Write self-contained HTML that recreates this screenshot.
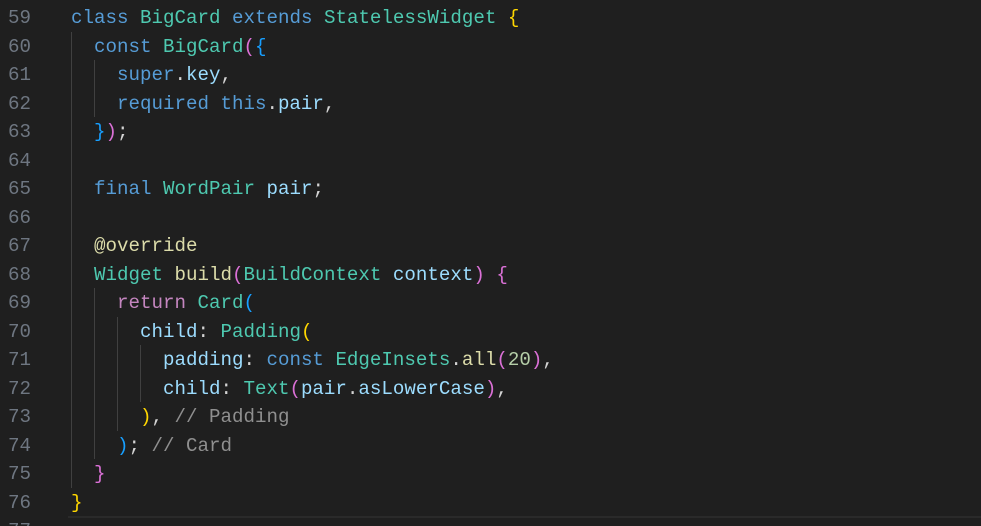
<!DOCTYPE html>
<html><head><meta charset="utf-8"><style>
html,body{margin:0;padding:0;background:#1f1f1f;width:981px;height:526px;overflow:hidden}
.ed{position:relative;font-family:"Liberation Mono",monospace;font-size:19.17px;}
.l{position:absolute;left:0;height:28.5px;line-height:28.5px;white-space:pre;width:981px}
.n{position:absolute;left:0;width:31px;text-align:right;color:#6e7681}
.c{position:absolute;left:71px;color:#d4d4d4}
.k{color:#569cd6}.t{color:#4ec9b0}.v{color:#9cdcfe}.f{color:#dcdcaa}.m{color:#b5cea8}.cm{color:#8f8f8f}.kc{color:#c586c0}
.g{color:#ffd700}.p{color:#da70d6}.b{color:#179fff}
.ig{position:absolute;width:1px;background:#404040}
</style></head><body><div class="ed">
<div class="ig" style="left:71px;top:32px;height:456px"></div>
<div class="ig" style="left:94px;top:60px;height:57px"></div>
<div class="ig" style="left:94px;top:288px;height:171px"></div>
<div class="ig" style="left:117px;top:317px;height:114px"></div>
<div class="ig" style="left:140px;top:345px;height:57px"></div>
<div class="l" style="top:4px"><span class="n">59</span><span class="c"><span class="k">class</span> <span class="t">BigCard</span> <span class="k">extends</span> <span class="t">StatelessWidget</span> <span class="g">{</span></span></div>
<div class="l" style="top:32.5px"><span class="n">60</span><span class="c">  <span class="k">const</span> <span class="t">BigCard</span><span class="p">(</span><span class="b">{</span></span></div>
<div class="l" style="top:61px"><span class="n">61</span><span class="c">    <span class="k">super</span>.<span class="v">key</span>,</span></div>
<div class="l" style="top:89.5px"><span class="n">62</span><span class="c">    <span class="k">required</span> <span class="k">this</span>.<span class="v">pair</span>,</span></div>
<div class="l" style="top:118px"><span class="n">63</span><span class="c">  <span class="b">}</span><span class="p">)</span>;</span></div>
<div class="l" style="top:146.5px"><span class="n">64</span></div>
<div class="l" style="top:175px"><span class="n">65</span><span class="c">  <span class="k">final</span> <span class="t">WordPair</span> <span class="v">pair</span>;</span></div>
<div class="l" style="top:203.5px"><span class="n">66</span></div>
<div class="l" style="top:232px"><span class="n">67</span><span class="c">  <span class="f">@override</span></span></div>
<div class="l" style="top:260.5px"><span class="n">68</span><span class="c">  <span class="t">Widget</span> <span class="f">build</span><span class="p">(</span><span class="t">BuildContext</span> <span class="v">context</span><span class="p">)</span> <span class="p">{</span></span></div>
<div class="l" style="top:289px"><span class="n">69</span><span class="c">    <span class="kc">return</span> <span class="t">Card</span><span class="b">(</span></span></div>
<div class="l" style="top:317.5px"><span class="n">70</span><span class="c">      <span class="v">child</span>: <span class="t">Padding</span><span class="g">(</span></span></div>
<div class="l" style="top:346px"><span class="n">71</span><span class="c">        <span class="v">padding</span>: <span class="k">const</span> <span class="t">EdgeInsets</span>.<span class="f">all</span><span class="p">(</span><span class="m">20</span><span class="p">)</span>,</span></div>
<div class="l" style="top:374.5px"><span class="n">72</span><span class="c">        <span class="v">child</span>: <span class="t">Text</span><span class="p">(</span><span class="v">pair</span>.<span class="v">asLowerCase</span><span class="p">)</span>,</span></div>
<div class="l" style="top:403px"><span class="n">73</span><span class="c">      <span class="g">)</span>, <span class="cm">// Padding</span></span></div>
<div class="l" style="top:431.5px"><span class="n">74</span><span class="c">    <span class="b">)</span>; <span class="cm">// Card</span></span></div>
<div class="l" style="top:460px"><span class="n">75</span><span class="c">  <span class="p">}</span></span></div>
<div class="l" style="top:488.5px"><span class="n">76</span><span class="c"><span class="g">}</span></span></div>
<div style="position:absolute;left:68px;top:516px;width:913px;height:10px;border-top:2px solid #2a2a2a;background:#1f1f1f"></div>
<div class="l" style="top:517px"><span class="n">77</span></div>
</div></body></html>
